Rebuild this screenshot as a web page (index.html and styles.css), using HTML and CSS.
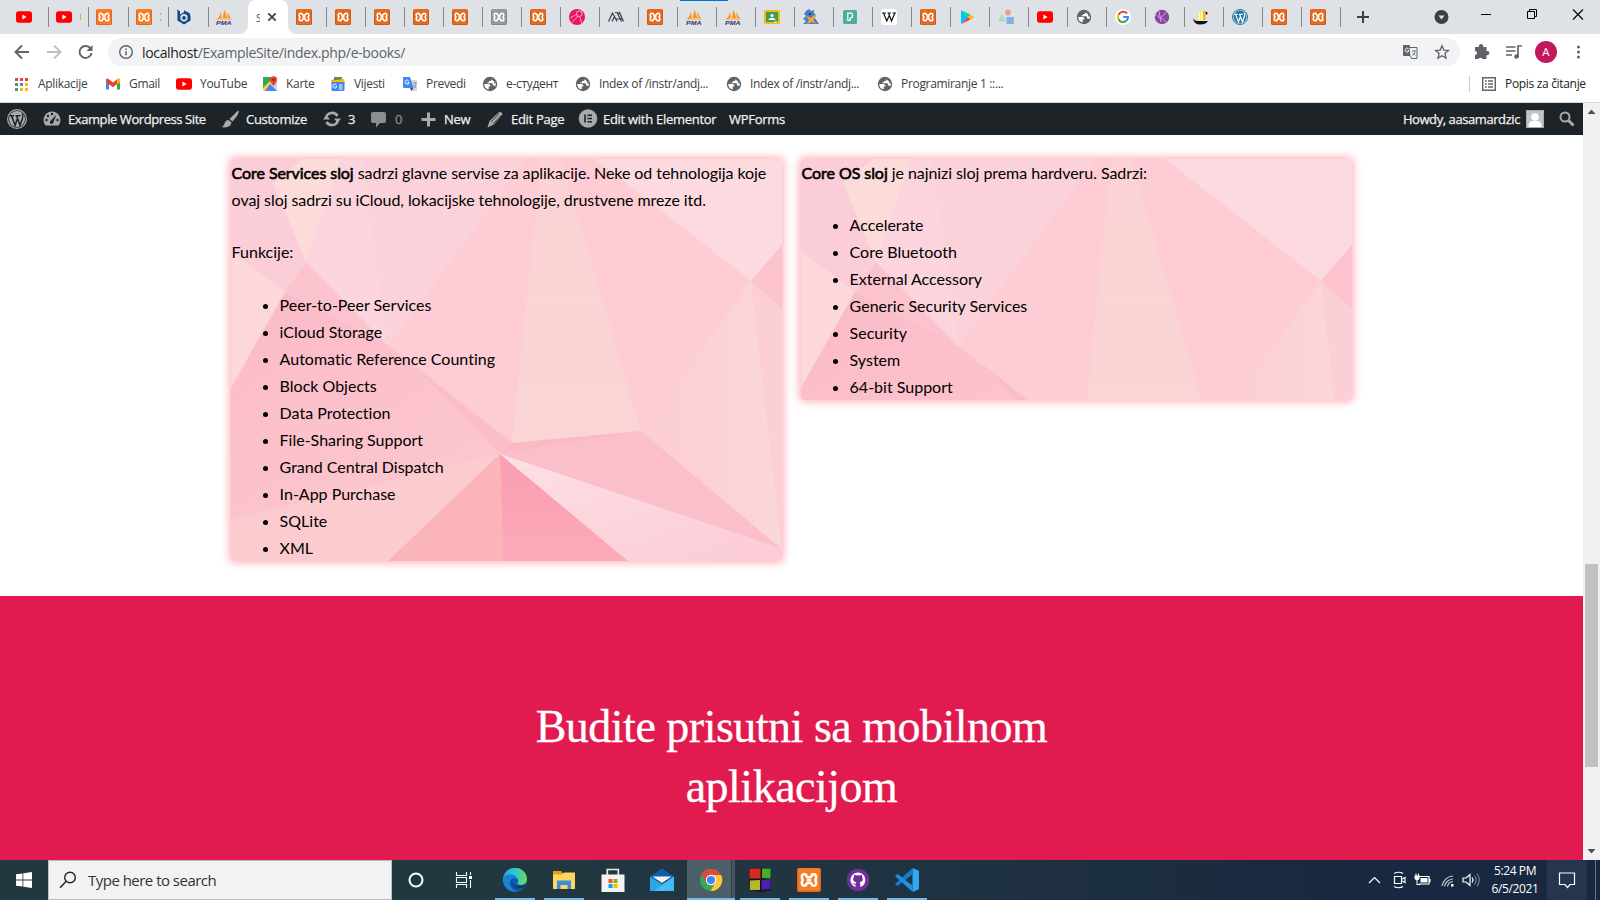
FILE: index.html
```html
<!DOCTYPE html>
<html lang="bs">
<head>
<meta charset="utf-8">
<title>E-books</title>
<link rel="stylesheet" href="styles.css">
</head>
<body>
<svg class="defs" width="0" height="0">
  <symbol id="yt" viewBox="0 0 16 16"><rect y="2.3" width="16" height="11.4" rx="2.6" fill="#f00"/><path d="M6.4 5.6v4.8L10.6 8z" fill="#fff"/></symbol>
  <symbol id="xa" viewBox="0 0 16 16"><rect width="16" height="16" rx="1.5" fill="currentColor"/><path d="M.5 1.500v13q0 1 1 1h13q1 0 1-1v-13" fill="none" stroke="#000" stroke-opacity=".12"/><path d="M5.200 4.200H4.800Q3.200 4.200 3.200 6T4.400 8Q3.200 8.300 3.200 10T4.800 11.800H5.200Q6.300 11.800 6.300 10.400 8 9.300 9.700 10.400 9.700 11.800 10.800 11.800H11.200Q12.800 11.800 12.800 10T11.600 8Q12.800 7.700 12.800 6T11.200 4.200H10.800Q9.700 4.200 9.700 5.600 8 6.700 6.300 5.600 6.300 4.200 5.200 4.200z" fill="none" stroke="#fff" stroke-width="1.600"/><path d="M6.500 8h3" stroke="#fff" stroke-width="1.800"/></symbol>
  <symbol id="bs" viewBox="0 0 16 16"><path d="M1 .5l3 1.700v3.300L8 3.200l6.500 3.300v5L8 15.500l-6.500-4V3z" fill="#0d4a86"/><path d="M8 1.200l6 3.300v2L8 3.800z" fill="#0d4a86"/><circle cx="8" cy="8.800" r="3.700" fill="#dee1e6"/><circle cx="8" cy="8.800" r="1.900" fill="#0d4a86"/></symbol>
  <symbol id="pma" viewBox="0 0 16 16"><path d="M1 10C3.500 8 4.500 5 5 2.500L5.800 9.500zM6.500 9.500L8.500.5l3 9zM11 3l4 6.500h-3z" fill="#f8981d"/><path d="M0 10.300l15.500.2" stroke="#f8b35c" stroke-width=".7"/><text x="0" y="15.800" font-size="6" font-family="Liberation Sans" font-weight="700" font-style="italic" fill="#34346b" textLength="15.500" lengthAdjust="spacingAndGlyphs">PMA</text></symbol>
  <symbol id="pink" viewBox="0 0 16 16"><circle cx="8" cy="8" r="8" fill="#e8175d"/><circle cx="10.300" cy="4.700" r="2.800" fill="none" stroke="#ffb5ca" stroke-width="1"/><path d="M9 7L3 13.500M8 5L1 9M11 8l1.500 6" stroke="#ffb5ca" stroke-width=".9"/></symbol>
  <symbol id="aa" viewBox="0 0 16 16"><path d="M.5 12.500L4.500 4l4.500 8.500M4 12.500L6.800 7M7 3.500h2l4.500 9M9.500 6l2-2.500 4 9M8 10h6" fill="none" stroke="#353c47" stroke-width="1.200"/></symbol>
  <symbol id="cls" viewBox="0 0 16 16"><rect y="1" width="16" height="14" rx="1" fill="#f5ba16"/><rect x="2" y="3" width="12" height="10" fill="#3f9d5a"/><circle cx="8" cy="6.600" r="1.500" fill="#fff"/><path d="M4.500 11c0-2.600 7-2.600 7 0zM10 12.500h3v1h-3z" fill="#fff"/></symbol>
  <symbol id="fox" viewBox="0 0 16 16"><path d="M3 2l3-2 2 2 3-1v3l2 2-1 3 4 6H0l3-3-3-2 3-3-2-2z" fill="#4580c6"/><path d="M3 6.500l5 2.500 5-4.500-1 4.500-2 2 3.500 4-4.500-2-5 2 2-4z" fill="#f5ab35"/><path d="M6 4h2v2H6z" fill="#17467e"/></symbol>
  <symbol id="pp" viewBox="0 0 16 16"><rect x="1" y="1" width="14" height="14" rx="1.500" fill="#4caf9d"/><path d="M5.800 4.200H9q1.500 0 1.500 1.800v1q0 2-2.300 2v2.500H5.800z" fill="none" stroke="#fff" stroke-width="1.200"/></symbol>
  <symbol id="wiki" viewBox="0 0 16 16"><rect width="16" height="16" rx="3" fill="#fff"/><path d="M1 4h4M6.500 4h3.500M11.500 4H15M2.500 4l3.300 8L8.500 6M7.500 4l3 8 3.300-8" fill="none" stroke="#111" stroke-width="1.200"/></symbol>
  <symbol id="play" viewBox="0 0 16 16"><path d="M2 1v14l7-7z" fill="#00c3ff"/><path d="M2 1l7 7 2.500-2.500z" fill="#00e676"/><path d="M2 15l7-7 2.500 2.500z" fill="#f5364b"/><path d="M9 8l2.500-2.500L15.500 8l-4 2.500z" fill="#ffc107"/></symbol>
  <symbol id="shp" viewBox="0 0 16 16"><circle cx="10" cy="3.500" r="2.900" fill="#f69a8c"/><path d="M0 12.500L4 5l4 7.500z" fill="#a3dcc5"/><rect x="8.500" y="8" width="7.300" height="7" fill="#82b1e6"/></symbol>
  <symbol id="globe" viewBox="0 0 16 16"><circle cx="8" cy="8" r="7.200" fill="#5f6368"/><path d="M2.200 8h4.300q1.800 0 1.800 1.600v1h-1.600v2.900Q2.300 12.500 2.200 8zM9.300 2.400V4q0 1-1 1H7v1.300H5.500v1h4.600q.8 0 .8.800v1.500h1.400l.9.900Q15 6.500 12.800 4.300 11.300 2.700 9.300 2.400z" fill="#fff"/><path d="M9.500 2.500l3 2.200.8 2.800" fill="none" stroke="#5f6368" stroke-width="1.600"/></symbol>
  <symbol id="goog" viewBox="0 0 16 16"><circle cx="8" cy="8" r="8" fill="#fff"/><path d="M12 4.500A5 5 0 0 0 3.500 5.800" fill="none" stroke="#ea4335" stroke-width="2"/><path d="M3.500 5.800a5 5 0 0 0 0 4.400" fill="none" stroke="#fbbc05" stroke-width="2"/><path d="M3.500 10.200a5 5 0 0 0 7.800 1.600" fill="none" stroke="#34a853" stroke-width="2"/><path d="M11.300 11.800A5 5 0 0 0 13 8H8.300" fill="none" stroke="#4285f4" stroke-width="2"/></symbol>
  <symbol id="kk" viewBox="0 0 16 16"><circle cx="8" cy="8" r="7.200" fill="#8744a0"/><path d="M5 2.500L7 13M12.500 3L7 8.500l5 4.500M1.500 5L6 9.500" fill="none" stroke="#dcb8e8" stroke-width=".9"/></symbol>
  <symbol id="ship" viewBox="0 0 16 16"><path d="M0 9.500q2 3 6 2.500h9q-2 3.500-8 3.500T0 9.500zM12 2.500q3 0 2.500 2.500L12 6z" fill="#111"/><path d="M4 5l2.500-2 2-2 4 1.500V11H4z" fill="#ffe176"/><path d="M6.300 4v7M9 2v9" stroke="#fff"/><path d="M10 2h2.500v9H10z" fill="#f2bd12"/></symbol>
  <symbol id="wpb" viewBox="0 0 20 20"><circle cx="10" cy="10" r="9.400" fill="none" stroke="currentColor" stroke-width="1.200"/><circle cx="10" cy="10" r="8" fill="currentColor"/><path d="M3 6.700h4M8.500 6.700h5M4.600 7l3.500 9.300L10.300 10M9.700 7l3.300 9.300 2.700-7.500q.8-2.400-.6-4" fill="none" stroke="var(--cut)" stroke-width="1.500"/></symbol>

  <symbol id="facets" viewBox="0 0 551 402">
    <defs>
      <linearGradient id="gd" x1="0" y1="0" x2=".8" y2="1"><stop offset="0" stop-color="#fbbac8"/><stop offset="1" stop-color="#fcc8cf"/></linearGradient>
      <linearGradient id="gt" x1="0" y1="0" x2="0" y2="1"><stop offset="0" stop-color="#fcd2d5"/><stop offset="1" stop-color="#f9d5d5"/></linearGradient>
      <linearGradient id="gr" x1="0" y1="0" x2="1" y2="0"><stop offset="0" stop-color="#fcccd3"/><stop offset="1" stop-color="#fad7da"/></linearGradient>
      <linearGradient id="gh" x1="0" y1="0" x2="0" y2="1"><stop offset="0" stop-color="#fb9db1"/><stop offset="1" stop-color="#fbaab8"/></linearGradient>
      <linearGradient id="gl" x1="0" y1="0" x2="1" y2="1"><stop offset="0" stop-color="#fde0e5"/><stop offset="1" stop-color="#fccbd5"/></linearGradient>
    </defs>
    <path d="M0 0h551v402H0z" fill="#fdccd4"/>
    <path d="M0 0h295L157 187 75 103 0 60z" fill="#fcd1da"/>
    <path d="M0 0h72L42 24l33 79-21 30-54-33z" fill="#fbcdd7"/>
    <path d="M131 0h164L157 187z" fill="#fcd2da"/>
    <path d="M110 0h21l26 187-82-84z" fill="#fbd4dd"/>
    <path d="M72 0h38L75 103 42 24z" fill="#fcdcd9"/>
    <path d="M0 92l54 41L0 229z" fill="#fcd8dc"/>
    <path d="M75 103l82 84-103-54z" fill="#fbc3ce"/>
    <path d="M54 133l103 54 124 97-12 11L0 361V229z" fill="url(#gd)"/>
    <path d="M180 204l101 80-12 11z" fill="#fbbec6"/>
    <path d="M0 361l269-66-112 107H0z" fill="#fccbcf"/>
    <path d="M269 295L157 402h115z" fill="#fbb5b9"/>
    <path d="M269 295l3 107h125z" fill="url(#gh)"/>
    <path d="M310 0h20l80 272-129 12z" fill="url(#gt)"/>
    <path d="M281 284l129-12-141 23z" fill="#fbb9c3"/>
    <path d="M269 295l141-23 141 118v5l-34-17z" fill="#fbbfcb"/>
    <path d="M269 295l248 83 34 12v12H397z" fill="url(#gl)"/>
    <path d="M520 122l-110 150 141 118z" fill="url(#gr)"/>
    <path d="M520 122l31 28v240z" fill="#fcced5"/>
    <path d="M364 0h187v86l-31 36z" fill="#fcdadf"/>
    <path d="M551 86l-31 36 31 28z" fill="#fcc3ce"/>
  </symbol>
</svg>

<div class="tabs">
  <div class="tab wide"><svg><use href="#yt"/></svg><i class="bit pale"></i></div>
  <div class="tab wide"><svg><use href="#yt"/></svg><i class="bit gold"></i></div>
  <div class="tab wide or"><svg><use href="#xa"/></svg><i class="bit pale"></i></div>
  <div class="tab wide or"><svg><use href="#xa"/></svg><i class="bit gold dots"></i></div>
  <div class="tab wide"><svg><use href="#bs"/></svg><i class="bit pale"></i></div>
  <div class="tab wide last"><svg><use href="#pma"/></svg><i class="bit pale"></i></div>
  <div class="tab active"><span class="clip">S</span><svg class="x" viewBox="0 0 10 10"><path d="M1.300 1.300l7.400 7.400M8.700 1.300L1.300 8.700" stroke="#3c4043" stroke-width="1.700"/></svg></div>
  <div class="tab dk"><svg><use href="#xa"/></svg></div>
  <div class="tab dk"><svg><use href="#xa"/></svg></div>
  <div class="tab dk"><svg><use href="#xa"/></svg></div>
  <div class="tab dk"><svg><use href="#xa"/></svg></div>
  <div class="tab dk"><svg><use href="#xa"/></svg></div>
  <div class="tab gy"><svg><use href="#xa"/></svg></div>
  <div class="tab dk"><svg><use href="#xa"/></svg></div>
  <div class="tab"><svg><use href="#pink"/></svg></div>
  <div class="tab"><svg><use href="#aa"/></svg></div>
  <div class="tab dk"><svg><use href="#xa"/></svg></div>
  <div class="tab"><svg><use href="#pma"/></svg></div>
  <div class="tab"><svg><use href="#pma"/></svg></div>
  <div class="tab"><svg><use href="#cls"/></svg></div>
  <div class="tab"><svg><use href="#fox"/></svg></div>
  <div class="tab"><svg><use href="#pp"/></svg></div>
  <div class="tab"><svg><use href="#wiki"/></svg></div>
  <div class="tab dk"><svg><use href="#xa"/></svg></div>
  <div class="tab"><svg><use href="#play"/></svg></div>
  <div class="tab"><svg><use href="#shp"/></svg></div>
  <div class="tab"><svg><use href="#yt"/></svg></div>
  <div class="tab"><svg><use href="#globe"/></svg></div>
  <div class="tab"><svg><use href="#goog"/></svg></div>
  <div class="tab"><svg><use href="#kk"/></svg></div>
  <div class="tab"><svg><use href="#ship"/></svg></div>
  <div class="tab wpt"><svg><use href="#wpb"/></svg></div>
  <div class="tab dk"><svg><use href="#xa"/></svg></div>
  <div class="tab dk"><svg><use href="#xa"/></svg></div>
  <svg class="wincontrols" viewBox="0 0 259 34"><path d="M16 17h12M22 11v12" stroke="#3c4043" stroke-width="2"/><circle cx="100.500" cy="17" r="7" fill="#3c4043"/><path d="M97.500 15.500h6l-3 4z" fill="#dee1e6"/><path d="M140 14.500h10" stroke="#000"/><path d="M186.500 11.500h7v7h-7zM188.500 11.500v-2h7v7h-2" fill="none" stroke="#000"/><path d="M232 9.500l10 10M242 9.500l-10 10" stroke="#000" stroke-width="1.100"/></svg>
  <div class="loading"></div>
</div>

<div class="toolbar">
  <svg class="nav" viewBox="0 0 108 34"><g fill="none" stroke-width="1.900"><path d="M29 18H16.500M22 11.500L15.500 18l6.500 6.500" stroke="#5f6368"/><path d="M47 18h12.500M54 11.500l6.500 6.500-6.500 6.500" stroke="#bcbec1"/><path d="M90.500 14.500a6 6 0 1 0 1 4.500" stroke="#5f6368"/></g><path d="M92.500 11v6h-6z" fill="#5f6368"/></svg>
  <div class="omnibox">
    <svg viewBox="0 0 16 16"><circle cx="8" cy="8" r="6.300" fill="none" stroke="#5f6368" stroke-width="1.400"/><path d="M8 7.200v4M8 4.500v1.500" stroke="#5f6368" stroke-width="1.500"/></svg>
    <span class="url"><b>localhost</b>/ExampleSite/index.php/e-books/</span>
    <svg class="tr" viewBox="0 0 16 16"><path d="M1 1h6.500l2.500 11H2q-1 0-1-1z" fill="#5f6368"/><path d="M7.500 3.500H15v11H9.500L8.500 12" fill="#f1f3f4" stroke="#5f6368"/><path d="M6.800 5.200a2 2 0 1 0 .2 1.500H5.300" fill="none" stroke="#fff"/><path d="M10 7h4M12 6v1M13.300 7.500q-1 3-3 4M10.800 8.500l2.500 3" fill="none" stroke="#5f6368" stroke-width=".8"/></svg>
    <svg viewBox="0 0 16 16"><path d="M8 1.800l1.800 4.300 4.700.4-3.600 3 1.100 4.600L8 11.700l-4 2.400 1.100-4.600-3.600-3 4.700-.4z" fill="none" stroke="#5f6368" stroke-width="1.300"/></svg>
  </div>
  <svg class="acts" viewBox="0 0 140 34"><path d="M15 13h4a2.200 2.200 0 1 1 4 0h3.500v4a2.200 2.200 0 1 1 0 4.200V25h-4a2.200 2.200 0 0 0-4 0H15v-4a2 2 0 1 0 0-4z" fill="#5f6368"/><path d="M46 13h9.500M46 17h9.500M46 21h6" stroke="#5f6368" stroke-width="1.700"/><path d="M58 23v-11h4" fill="none" stroke="#5f6368" stroke-width="1.700"/><circle cx="56.500" cy="22.500" r="2.300" fill="#5f6368"/><circle cx="86" cy="18" r="11" fill="#c2185b"/><text x="86" y="22" font-size="11.500" font-family="Open Sans" fill="#fff" text-anchor="middle">A</text><g fill="#5f6368"><circle cx="118.500" cy="13" r="1.500"/><circle cx="118.500" cy="18" r="1.500"/><circle cx="118.500" cy="23" r="1.500"/></g></svg>
</div>

<div class="bookmarks">
  <div class="bm"><svg viewBox="0 0 16 16"><g fill="#ea4335"><path d="M1 2h3v3H1zM6 2h3v3H6zM11 2h3v3h-3z"/></g><path d="M1 7h3v3H1z" fill="#34a853"/><path d="M6 7h3v3H6z" fill="#4285f4"/><path d="M11 7h3v3h-3z" fill="#fbbc05"/><path d="M1 12h3v3H1z" fill="#34a853"/><path d="M6 12h3v3H6zM11 12h3v3h-3z" fill="#fbbc05"/></svg><span>Aplikacije</span></div>
  <div class="bm"><svg viewBox="0 0 16 16"><path d="M1 4h3v9.500H1z" fill="#4285f4"/><path d="M12 4h3v9.500h-3z" fill="#34a853"/><path d="M1 3.500q1-1.500 2.500-.5L8 6.500 12.500 3Q14 2 15 3.500V6l-7 5.300L1 6z" fill="#ea4335"/><path d="M12 3.400Q14 2 15 3.500V6l-3 2.200z" fill="#fbbc04"/></svg><span>Gmail</span></div>
  <div class="bm"><svg><use href="#yt"/></svg><span>YouTube</span></div>
  <div class="bm"><svg viewBox="0 0 16 16"><path d="M1 1h14v14H1z" fill="#34a853"/><path d="M1 15L15 2v13z" fill="#cfd4da"/><path d="M1 12L12 1h3v3L4 15H1z" fill="#fbd04b"/><path d="M8 8l7 7H3z" fill="#4285f4"/><path d="M11.500 10Q8 6 8 3.800a3.500 3.500 0 0 1 7 0Q15 6 11.500 10z" fill="#ea4335"/><circle cx="11.500" cy="3.700" r="1.200" fill="#8c1d18"/></svg><span>Karte</span></div>
  <div class="bm"><svg viewBox="0 0 16 16"><path d="M4 1h8v5H4z" fill="#34a853"/><path d="M1.500 4L9 2.500 14 5v4H2z" fill="#ea4335"/><path d="M2 4.500L14 3l1 5H2z" fill="#fbbc04"/><rect x="1.500" y="6" width="13" height="9" rx="1" fill="#4285f4"/><path d="M6.500 9a2 2 0 1 0 .3 1.500H5.500M9 9h3.500M9 11h3.500M9 13h3.500" fill="none" stroke="#fff"/></svg><span>Vijesti</span></div>
  <div class="bm"><svg viewBox="0 0 16 16"><path d="M6 4h9v11H9z" fill="#d5d8dc"/><path d="M1 1h7l3.500 11H2q-1 0-1-1z" fill="#4285f4"/><path d="M8 12h3.500L9.500 15z" fill="#1a55c4"/><path d="M6.700 5a2 2 0 1 0 .3 1.600H5.300" fill="none" stroke="#fff"/><path d="M11 7h4M13 6v1M14 8q-1 3-3 4M11.500 9l2.500 3" fill="none" stroke="#7a8088" stroke-width=".8"/></svg><span>Prevedi</span></div>
  <div class="bm"><svg><use href="#globe"/></svg><span>е-студент</span></div>
  <div class="bm"><svg><use href="#globe"/></svg><span>Index of /instr/andj...</span></div>
  <div class="bm"><svg><use href="#globe"/></svg><span>Index of /instr/andj...</span></div>
  <div class="bm"><svg><use href="#globe"/></svg><span>Programiranje 1 ::...</span></div>
  <div class="bm list"><svg viewBox="0 0 16 16"><path d="M1.700 1.700h12.600v12.600H1.700z" fill="none" stroke="#5f6368" stroke-width="1.400"/><path d="M4 5h1.700M4 8h1.700M4 11h1.700M7 5h5M7 8h5M7 11h5" stroke="#5f6368" stroke-width="1.400"/></svg><span>Popis za čitanje</span></div>
</div>

<div class="view">
  <div class="page">
    <div class="adminbar">
      <div class="ab logo"><svg><use href="#wpb"/></svg></div>
      <div class="ab tight"><svg viewBox="0 0 20 20"><path d="M3.500 16.500a8.500 8.500 0 1 1 13 0z" fill="#a7aaad"/><g fill="#1d2327"><circle cx="4.500" cy="11" r="1.200"/><circle cx="6" cy="7" r="1.200"/><circle cx="10" cy="5" r="1.200"/><circle cx="15.500" cy="11" r="1.200"/><path d="M14.500 5.500L11.500 13a1.800 1.800 0 1 1-2.500-1.500z"/></g></svg><span>Example Wordpress Site</span></div>
      <div class="ab"><svg viewBox="0 0 20 20"><path d="M18.500 1.500Q19.500 3 17 7l-4.500 5.500-3-2.500L15 4.500Q17 2 18.500 1.500zM8.500 11l3 2.500q-.5 3.500-4 4.500-3 .8-6 0Q4 17 4.500 14.500 5.500 11 8.500 11z" fill="#a7aaad"/></svg><span>Customize</span></div>
      <div class="ab"><svg viewBox="0 0 20 20"><path d="M4 8.500a6.300 6.300 0 0 1 11.500-1.500M16 11.500A6.300 6.300 0 0 1 4.500 13" fill="none" stroke="#a7aaad" stroke-width="2.600"/><path d="M12 9.500h7l-3.500 4.500zM1 10.500h7L4.500 6z" fill="#a7aaad"/></svg><span>3</span></div>
      <div class="ab dim"><svg viewBox="0 0 20 20"><path d="M4 3h11q2 0 2 2v7q0 2-2 2h-4l-4 4.500V14H4q-2 0-2-2V5q0-2 2-2z" fill="#8a8e92"/></svg><span>0</span></div>
      <div class="ab"><svg viewBox="0 0 20 20"><path d="M10.500 3.500v14M3.500 10.500h14" stroke="#a7aaad" stroke-width="3"/></svg><span>New</span></div>
      <div class="ab"><svg viewBox="0 0 20 20"><path d="M13.500 3.500q3-1.500 4 2L9 15.500l-6.500 3L4.500 12z" fill="#a7aaad"/><path d="M6 13l8-8.500M8 15l8.500-9" stroke="#1d2327" stroke-width=".8"/></svg><span>Edit Page</span></div>
      <div class="ab logo"><svg viewBox="0 0 20 20"><circle cx="10" cy="9.500" r="9.300" fill="#a7aaad"/><path d="M7 5.500v8M9.500 6.300H14M9.500 9.500H14M9.500 12.700H14" stroke="#1d2327" stroke-width="1.600"/></svg><span>Edit with Elementor</span></div>
      <div class="ab"><span>WPForms</span></div>
      <div class="ab me tight"><span>Howdy, aasamardzic</span><svg class="av" viewBox="0 0 18 18"><path d="M0 0h18v18H0z" fill="#c3c4c7"/><circle cx="9" cy="7" r="3.800" fill="#fff"/><path d="M2.500 17q0-6 4-6h5q4 0 4 6z" fill="#fff"/><path d="M.5.500h17v17H.5z" fill="none" stroke="#a7aaad"/></svg><svg class="mag" viewBox="0 0 16 16"><circle cx="6" cy="6" r="4.500" fill="none" stroke="#a7aaad" stroke-width="2"/><path d="M9.500 9.500l5 5" stroke="#a7aaad" stroke-width="3"/></svg></div>
    </div>
    <div class="columns">
      <section class="card">
        <svg class="bg" width="551" height="402"><use href="#facets"/></svg>
        <p class="wide-text"><b>Core Services sloj</b> sadrzi glavne servise za aplikacije. Neke od tehnologija koje<br>ovaj sloj sadrzi su iCloud, lokacijske tehnologije, drustvene mreze itd.</p>
        <p class="label">Funkcije:</p>
        <ul><li>Peer-to-Peer Services</li><li>iCloud Storage</li><li>Automatic Reference Counting</li><li>Block Objects</li><li>Data Protection</li><li>File-Sharing Support</li><li>Grand Central Dispatch</li><li>In-App Purchase</li><li>SQLite</li><li>XML</li></ul>
      </section>
      <section class="card">
        <svg class="bg" width="551" height="402"><use href="#facets"/></svg>
        <p class="wide-text"><b>Core OS sloj</b> je najnizi sloj prema hardveru. Sadrzi:</p>
        <ul><li>Accelerate</li><li>Core Bluetooth</li><li>External Accessory</li><li>Generic Security Services</li><li>Security</li><li>System</li><li>64-bit Support</li></ul>
      </section>
    </div>
    <div class="banner"><h2>Budite prisutni sa mobilnom<br>aplikacijom</h2></div>
  </div>
  <div class="scroll"><svg viewBox="0 0 17 17"><path d="M4.500 11h8l-4-4.500z" fill="#505050"/></svg><div class="thumb"></div><svg viewBox="0 0 17 17"><path d="M4.500 6h8l-4 4.500z" fill="#505050"/></svg></div>
</div>

<div class="taskbar">
  <div class="start"><svg viewBox="0 0 16 16" width="16" height="16"><path d="M0 2.300L6.500 1.400v6.200H0zM7.300 1.300L16 0v7.600H7.300zM0 8.400h6.500v6.200L0 13.700zM7.300 8.400H16V16l-8.700-1.300z" fill="#fff"/></svg></div>
  <div class="search"><svg viewBox="0 0 18 18"><circle cx="11" cy="6.500" r="5.300" fill="none" stroke="#222" stroke-width="1.400"/><path d="M7.200 10.300L1 16.800" stroke="#222" stroke-width="1.400"/></svg><span>Type here to search</span></div>
  <div class="app sys"><svg viewBox="0 0 24 24"><circle cx="12" cy="12" r="6.500" fill="none" stroke="#fff" stroke-width="2"/></svg></div>
  <div class="app sys view-btn"><svg viewBox="0 0 24 24"><path d="M4.500 4v3.500h10V4M4.500 20v-3.500h10V20M4.500 9.500h10v5h-10zM18.500 4v3M18.500 12v8" fill="none" stroke="#fff" stroke-width="1.100"/><path d="M17 8h3v3h-3z" fill="#fff"/></svg></div>
  <div class="app open"><svg viewBox="0 0 24 24"><defs><linearGradient id="e1" x1="0" x2="1"><stop offset="0" stop-color="#21a5e6"/><stop offset=".5" stop-color="#2fc6d4"/><stop offset="1" stop-color="#6bdc57"/></linearGradient></defs><circle cx="12" cy="12" r="12" fill="#0d5cab"/><path d="M0 12A12 12 0 0 1 24 11.500c0 4-3.500 5.500-6.500 5.500-2.500 0-3.700-1-3-2 1.500-2 .5-6-4-6C5.500 9 3 12 3.500 17Q0 15 0 12z" fill="url(#e1)"/><path d="M1 9Q4 5.500 9 6.500c4 .8 6 3.500 5.500 6C13 9 8 9 7 14c-.8 4.500 3 8.500 7 9.500C6 25-2 18 1 9z" fill="#1b82cf"/><path d="M9 11.500c-3 3.500.5 9.500 6 9.300q4 0 6.500-3-4 1.500-8 0C10 16.500 8.500 14 9 11.500z" fill="#0c4b94"/><path d="M14.500 15.500q-.5 2 3 2 4 0 6-3-1.500 4-4 5.500-3 1-5-.5z" fill="#223840"/></svg></div>
  <div class="app open"><svg viewBox="0 0 24 24"><path d="M1 3h8l1.500 2H22v16H1z" fill="#e3a21a"/><path d="M1 6.500h9L12 4.500h11V21H1z" fill="#ffd562"/><path d="M5 12.500h14V21h-3.500v-4h-7v4H5z" fill="#3c8fd6"/></svg></div>
  <div class="app"><svg viewBox="0 0 24 24"><path d="M6.300 7V1.500h11V7" fill="none" stroke="#e8e8e8" stroke-width="1.700"/><path d="M.5 6.500h23V24H.5z" fill="#f4f4f4"/><path d="M7.500 11h4v4h-4z" fill="#f25022"/><path d="M12.500 11h4v4h-4z" fill="#7fba00"/><path d="M7.500 16h4v4h-4z" fill="#00a4ef"/><path d="M12.500 16h4v4h-4z" fill="#ffb900"/></svg></div>
  <div class="app"><svg viewBox="0 0 24 24"><path d="M0 8.500L12 .5l12 8V12H0z" fill="#0f5fa8"/><path d="M0 8.500L12 16l12-7.500V23H0z" fill="#2aa6e6"/><path d="M24 8.500V23H4z" fill="#40bdf2"/><path d="M2.500 8.500h19L12 15z" fill="#f3f3f3"/></svg></div>
  <div class="app open on"><svg viewBox="0 0 24 24"><circle cx="12" cy="12" r="11" fill="#34a853"/><path d="M12 12L2.500 6.500A11 11 0 0 1 21.500 6.500z" fill="#dd4a3f"/><path d="M12 7h10a11 11 0 0 1-10.500 16L16 15z" fill="#fbc934"/><path d="M2.500 6.500L7.500 15 12 7h9.800A11 11 0 0 0 2.500 6.500z" fill="#dd4a3f"/><circle cx="12" cy="12" r="5.200" fill="#fff"/><circle cx="12" cy="12" r="4.100" fill="#4285f4"/></svg></div>
  <div class="app open"><svg viewBox="0 0 24 24"><path d="M1 0h21l1 22-9 2L2 22z" fill="#151515"/><path d="M1.500.5h11v10h-11z" fill="#d62a22"/><path d="M14 .5h8.500v10L14 10z" fill="#43b02a"/><path d="M2 12.500l10-.5v10L2 22z" fill="#b9b62b"/><path d="M13.500 12l9-1v10l-9 1z" fill="#4b1fb0"/></svg></div>
  <div class="app open or"><svg viewBox="0 0 16 16"><use href="#xa"/></svg></div>
  <div class="app open"><svg viewBox="0 0 24 24"><circle cx="12" cy="12" r="11.200" fill="#6e2f9c"/><path d="M12 4.500a7.500 7.500 0 0 0-2.500 14.600v-2.500Q7.500 17 6.800 15q2 1.500 3 .3.200-.8.600-1C7 13.800 6.500 11 8 9q-.4-1.500.2-2.300 1 0 2 .8 1.800-.5 3.600 0 1-.8 2-.8.600.8.200 2.300c1.500 2 1 4.800-2.400 5.300q.7.600.7 1.800v3A7.500 7.500 0 0 0 12 4.500z" fill="#fff"/></svg></div>
  <div class="app open"><svg viewBox="0 0 24 24"><path d="M17.500 0L24 2.800v18.400L17.500 24z" fill="#2fa8f0"/><path d="M17.500 0v6.500L2.500 18 0 16z" fill="#0f7fcc"/><path d="M17.500 24v-6.500L2.500 6 0 8z" fill="#1b93e0"/></svg></div>
  <div class="tray">
    <svg viewBox="0 0 120 40"><g fill="none" stroke="#fff" stroke-width="1.200"><path d="M2 23l5.500-5.500L13 23"/><path d="M27.500 16.500h7v7h-7zM35 19l3-1.500v5L35 21M27 13.500q5-2.500 9 0M27 26.500q5 2.500 9 0"/><path d="M52 16.500h10v7.500H52M63 19v3"/><path d="M75 26a12 12 0 0 1 11-10M77.500 26.500a9 9 0 0 1 8.500-7.500M80.500 26.500a6 6 0 0 1 5.500-5" opacity=".75"/><path d="M96 18h3l4-3.500v11L99 22h-3z"/><path d="M105 17.500q2 2.500 0 5"/><path d="M107.500 15.500q3.500 4.500 0 9M110 13.500q4.500 6.500 0 13" opacity=".4"/></g><path d="M53.500 18h7v4.500h-7zM47.500 15.500h5v3q-1 2-2.500 2t-2.500-2zM48.500 13.500h1v2h-1zM51 13.500h1v2h-1zM49.500 20h1v4h3v1h-4zM84 24h2.500v2.500H84z" fill="#fff"/></svg>
    <div class="clock"><span>5:24 PM</span><span class="date">6/5/2021</span></div>
    <div class="note"><svg viewBox="0 0 18 18"><path d="M1.500 2h15v11.500H12l-2.500 3L7 13.500H1.500z" fill="none" stroke="#fff" stroke-width="1.200"/></svg></div>
    <div class="peek"></div>
  </div>
</div>
</body>
</html>
```
FILE: styles.css
```css
* { box-sizing: border-box; }
body { margin: 0; width: 1600px; height: 900px; overflow: hidden; display: flex; flex-direction: column; background: #fff; font-family: "Open Sans", "Noto Sans", sans-serif; color: #000; }
svg { display: block; flex: none; }
.defs { position: absolute; }

/* Tab strip */
.tabs { height: 34px; flex: none; display: flex; background: #dee1e6; position: relative; padding-left: 9px; }
.tab { width: 39px; height: 34px; padding-left: 8px; display: flex; align-items: center; position: relative; flex: none; }
.tab svg { width: 16px; height: 16px; }
.tab::after { content: ""; position: absolute; right: 0; top: 7px; width: 1px; height: 20px; background: #85888d; }
.tab.wide { width: 40px; padding-left: 7px; }
.tab.last { width: 39px; }
.tab.last::after, .tab.active::after { display: none; }
.tab.active { width: 40px; background: #fff; border-radius: 8px 8px 0 0; padding-left: 8px; }
.tab.active::before { content: ""; position: absolute; inset: auto -8px 0; height: 8px; background: radial-gradient(circle at 0 0, transparent 7.500px, #fff 8px) left / 8px 8px no-repeat, radial-gradient(circle at 100% 0, transparent 7.500px, #fff 8px) right / 8px 8px no-repeat; }
.tab svg.x { width: 10px; height: 10px; margin-left: 7px; }
.clip { width: 4px; overflow: hidden; font-size: 11px; color: #555; }
.bit { width: 1px; height: 11px; margin-left: 8px; background: #ead9b0; }
.bit.gold { background: #e8a33c; height: 6px; }
.bit.pale { background: #e6e0cc; }
.bit.dots { height: 8px; background: repeating-linear-gradient(#e8a33c 0 2px, transparent 2px 6px); }
.or { color: #fb7a24; }
.dk { color: #e56a1e; }
.gy { color: #999; }
.wpt { color: #21759b; --cut: #fff; }
.wincontrols { width: 259px; height: 34px; }
.loading { position: absolute; left: 680px; top: 0; width: 48px; height: 1px; background: #0078d7; }

/* Address bar */
.toolbar { height: 34px; flex: none; display: flex; }
.nav { width: 108px; height: 34px; }
.omnibox { width: 1352px; height: 28px; margin-top: 4px; border-radius: 14px; background: #f1f3f4; display: flex; align-items: center; padding: 0 10px; }
.omnibox svg { width: 16px; height: 16px; }
.url { flex: 1; margin-left: 8px; font-size: 14px; color: #5f6368; letter-spacing: -.33px; }
.url b { font-weight: 400; color: #202124; }
.omnibox .tr { margin-right: 16px; }
.acts { width: 140px; height: 34px; }

/* Bookmarks */
.bookmarks { height: 35px; flex: none; border-bottom: 1px solid #d6d8db; display: grid; grid-template-columns: 91px 71px 86px 68px 72px 80px 93px 151px 151px 150px 1fr; padding: 0 15px 2px 14px; align-items: center; }
.bm { display: flex; align-items: center; gap: 8px; font-size: 12px; line-height: 16px; color: #3c4043; white-space: nowrap; letter-spacing: -.32px; }
.bm svg { width: 16px; height: 16px; }
.bm.list { justify-self: end; width: 116px; height: 16px; border-left: 1px solid #c8cacd; padding-left: 11px; color: #202124; }

/* Page */
.view { height: 757px; flex: none; display: flex; }
.page { width: 1583px; display: flex; flex-direction: column; }
.adminbar { height: 32px; flex: none; background: #1d2327; color: #f0f0f1; display: grid; grid-template-columns: 36px 178px 102px 47px 49px 67px 92px 151px 90px 1fr; padding-left: 7px; align-items: center; }
.ab { display: flex; align-items: center; gap: 5px; font-size: 13px; white-space: nowrap; letter-spacing: -.28px; color: #f0f0f1; -webkit-text-stroke: .25px; --cut: #1d2327; }
.ab.tight { letter-spacing: -.42px; }
.ab svg { width: 20px; height: 20px; color: #a7aaad; margin-left: -1px; margin-right: 1px; }
.ab.logo svg { margin-left: 0; margin-right: 0; }
.ab.dim { color: #8a8e92; }
.me { justify-self: end; padding-right: 8px; }
.ab svg.av { width: 18px; height: 18px; margin: 0 0 0 1px; }
.ab svg.mag { width: 16px; height: 16px; margin: 0 0 0 10px; }
.columns { height: 461px; flex: none; display: flex; align-items: flex-start; gap: 19px; padding: 24px 0 0 231px; }
.card { width: 551px; position: relative; overflow: hidden; border-radius: 4px; box-shadow: 0 0 8px 2px #ffb3bb; font: 16px/27px Lato, sans-serif; font-variant-ligatures: none; padding-left: .6px; }
.bg { position: absolute; left: 0; top: 0; z-index: 0; }
.card p, .card ul { position: relative; margin: 0 0 25px; }
.label + ul { margin-top: 26px; }
.wide-text { letter-spacing: -.065px; white-space: nowrap; }
.card ul { margin-bottom: 0; padding-left: 48px; }
.card b { font-weight: 400; -webkit-text-stroke: .6px #000; }
.banner { flex: 1; background: #e11b4f; color: #fff; }
.banner h2 { margin: 0; padding-top: 101px; text-align: center; font: 400 46px/60px "Liberation Serif", serif; letter-spacing: -.5px; -webkit-text-stroke: .3px #fff; }
.scroll { width: 17px; background: #f1f1f1; display: flex; flex-direction: column; }
.scroll svg { width: 17px; height: 17px; }
.thumb { width: 13px; height: 203px; margin: 444px 2px 76px; background: #c1c1c1; }

/* Taskbar */
.taskbar { height: 40px; flex: none; display: flex; background: linear-gradient(90deg, #223840 0, #223840 32%, #1f3242 60%, #182840 85%); }
.start { width: 48px; display: grid; place-items: center; }
.search { width: 344px; background: #f2f2f2; border: 1px solid #bdbdbd; display: flex; align-items: center; gap: 11px; padding-left: 10px; font-size: 15px; letter-spacing: -.5px; color: #333; }
.search { letter-spacing: -.52px; }
.search svg { width: 18px; height: 18px; }
.app { width: 49px; display: grid; place-items: center; position: relative; }
.app.sys { width: 48px; }
.app.view-btn { margin-right: 2px; }
.app svg { width: 24px; height: 24px; }
.app.open::after { content: ""; position: absolute; left: 5px; bottom: 0; width: 40px; height: 2px; background: #76b9ed; }
.app.on { background: linear-gradient(90deg, transparent 0 1px, #4d5f66 1px 45px, #2c4048 45px 46px, #44565e 46px); }
.app.on::after { left: 1px; width: 48px; }
.tray { margin-left: auto; width: 233px; display: flex; }
.tray > svg { width: 120px; height: 40px; }
.clock { width: 56px; display: flex; flex-direction: column; align-items: center; font-size: 12px; line-height: 18px; padding-top: 2px; color: #fff; letter-spacing: -.4px; white-space: nowrap; }
.note { width: 40px; margin-left: 4px; background: #27344f; display: grid; place-items: center; }
.note svg { width: 18px; height: 18px; }
.peek { width: 9px; border-right: 1px solid #6b7688; }
```
